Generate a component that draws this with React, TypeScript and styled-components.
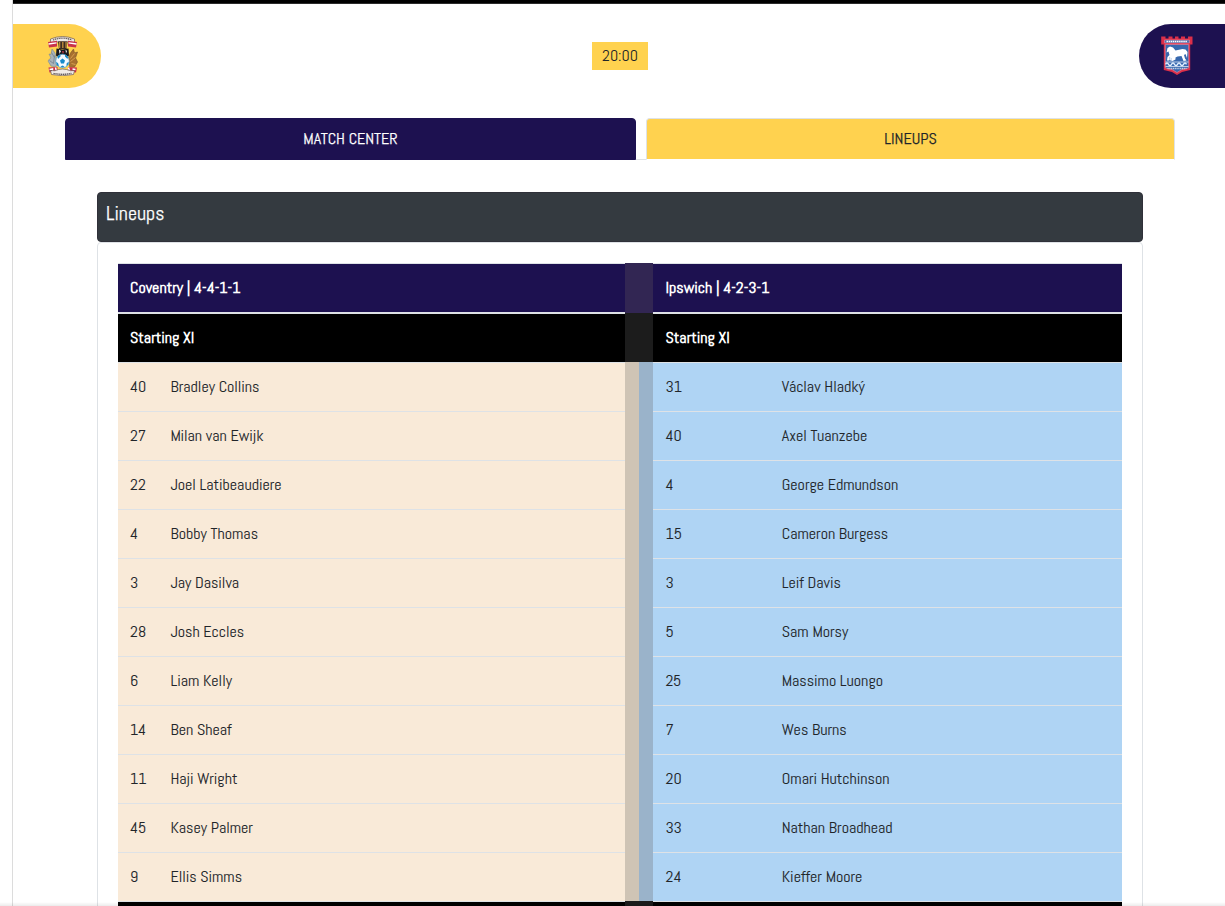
import React from "react";
import styled, { createGlobalStyle } from "styled-components";

const navy = "#1d1150";
const gold = "#ffd24f";
const line = "#dee2e6";

const GlobalStyle = createGlobalStyle`
  *, *::before, *::after { box-sizing: border-box; }
  body {
    margin: 0;
    height: 906px;
    overflow: hidden;
    background: #fff;
    color: #212529;
    font: 16px/24px Abel, "Liberation Sans Narrow", "Liberation Sans", sans-serif;
  }
`;

const Page = styled.main`
  height: 906px;
  margin-left: 12px;
  border-left: 1px solid #dcdcdc;
  overflow: hidden;
`;

const TopBar = styled.div`
  height: 4px;
  background: #000;
  border-bottom: 1px solid #2b2b2b;
`;

const Scoreboard = styled.header`
  display: flex;
  justify-content: space-between;
  align-items: center;
  height: 64px;
  margin-top: 20px;
`;

const TeamBadge = styled.div<{ $side: "home" | "away" }>`
  display: flex;
  align-items: center;
  height: 64px;
  width: ${(p) => (p.$side === "home" ? 88 : 86)}px;
  padding-left: ${(p) => (p.$side === "home" ? 34 : 22)}px;
  background: ${(p) => (p.$side === "home" ? gold : navy)};
  border-radius: ${(p) => (p.$side === "home" ? "0 32px 32px 0" : "32px 0 0 32px")};
`;

const KickOff = styled.div`
  width: 56px;
  height: 28px;
  line-height: 28px;
  text-align: center;
  background: ${gold};
`;

const Tabs = styled.nav`
  display: flex;
  height: 42px;
  margin: 30px 50px 0 52px;
`;

const TabSpacer = styled.span`
  width: 10px;
  border-bottom: 1px solid ${line};
`;

const Tab = styled.button<{ $active?: boolean }>`
  flex: 0 0 ${(p) => (p.$active ? 529 : 571)}px;
  height: 42px;
  padding: 0;
  font: inherit;
  text-align: center;
  -webkit-text-stroke: 0.25px currentColor;
  color: ${(p) => (p.$active ? "#212529" : "#fff")};
  background: ${(p) => (p.$active ? gold : navy)};
  border: 1px solid ${(p) => (p.$active ? line : navy)};
  border-bottom-color: ${(p) => (p.$active ? "#fff" : navy)};
  border-radius: 4px 4px 0 0;
`;

const Panel = styled.section`
  margin: 32px 82px 0 84px;
`;

const PanelTitle = styled.h2`
  height: 50px;
  margin: 0;
  padding: 8px;
  font-size: 20px;
  font-weight: 400;
  line-height: 24px;
  -webkit-text-stroke: 0.25px currentColor;
  color: #fff;
  background: #343a40;
  border: 1px solid #2f3039;
  border-radius: 4px;
`;

const PanelBody = styled.div`
  height: 680px;
  padding: 20px;
  border: 1px solid ${line};
  border-radius: 4px;
`;

const Sheet = styled.div`
  display: grid;
  grid-template-columns: 507px 28px 469px;
`;

const Column = styled.div<{ $side: "home" | "away" }>`
  --inset: ${(p) => (p.$side === "home" ? "12px" : "12.5px")};
`;

const HeadRow = styled.div<{ $dark?: boolean }>`
  height: ${(p) => (p.$dark ? 49 : 50)}px;
  padding: 12px var(--inset);
  font-weight: 700;
  color: #fff;
  background: ${(p) => (p.$dark ? "#000" : navy)};
  border-top: 1px solid ${line};
  ${(p) => !p.$dark && `border-bottom: 1px solid ${line};`}
`;

const PlayerRow = styled.div<{ $side: "home" | "away" }>`
  display: grid;
  grid-template-columns: ${(p) => (p.$side === "home" ? "40.5px" : "116.3px")} 1fr;
  height: 49px;
  padding: 12px var(--inset) 0;
  -webkit-text-stroke: 0.1px currentColor;
  background: ${(p) => (p.$side === "home" ? "#f9ead8" : "#afd4f4")};
  border-top: 1px solid ${line};
`;

const Gutter = styled.div`
  display: grid;
  grid-template-rows: 50px 49px 539px 1fr;
`;

const GutterCell = styled.div<{ $color: string }>`
  background: ${(p) => p.$color};
`;

const GutterSplit = styled.div`
  display: grid;
  grid-template-columns: 1fr 1fr;
`;

const BottomShade = styled.div`
  position: fixed;
  inset: auto 0 0 0;
  height: 4px;
  background: linear-gradient(rgba(0, 0, 0, 0), rgba(0, 0, 0, 0.08));
`;

function CoventryCrest() {
  return (
    <svg width="32" height="40" viewBox="0.500 0.500 32 40" aria-label="Coventry">
      <path d="M4 3.500Q16-1.500 28 3.500V8q-12-4-24 0z" fill="#efe9e6" stroke="#6b5a55" strokeWidth=".7" />
      <path d="M6.500 4.500Q16 .8 25.500 4.500" fill="none" stroke="#655d60" strokeWidth="1.300" strokeDasharray="1.300 .6" />
      <path d="M1.500 6.500l9-1.200V11l-8 1zM21.500 5.300l9 1.200-1 5.500-8-1z" fill="#c8324a" />
      <path d="M2 8.500l8-1.200M22 7.300l8 1.200" stroke="#fff" strokeWidth="1.300" />
      <path d="M11.500 6h9.500l-1 8h-7.500z" fill="#3b2b24" />
      <path d="M12.500 6.500h1.300v6h-1.300zM15.600 6.500h1.400v6h-1.400zM18.900 6.500h1.300v6h-1.300z" fill="#be8b3c" />
      <path d="M10 13l3 .5 3 1 3-1 3-.5.500 7-2 2h-9l-2-2z" fill="#17171c" />
      <path d="M12.500 14l2 1.500-1.500 3zM19 14l1.500 1.500-1 2.500z" fill="#fff" />
      <path d="M15.500 15.500l2 .5-1 2.500z" fill="#d8404c" />
      <path d="M5.500 13.500l3 4 1 4.500 1 4-1 5.500-5-1-3-5 1.500-2 1.500-1-2-4 2 .5z" fill="#a9b3ba" stroke="#7c8990" strokeWidth=".6" />
      <path d="M5 17l3 5M3 25l4 3M8 20l-1 8" stroke="#71838f" strokeWidth=".8" />
      <path d="M27 13.500l-3 4-2 4.500 1 9 5 .5 3-5-2-4 2-6-3 1z" fill="#a8702f" stroke="#74502a" strokeWidth=".6" />
      <path d="M28 18l-4 5M29 22l-5 4M25 28l4 1" stroke="#dba452" strokeWidth=".9" />
      <circle cx="16" cy="25.500" r="6.800" fill="#f4faff" stroke="#4a96c2" strokeWidth=".7" />
      <path d="M13.500 25l2.500-2 2.500 2-1 3h-3zM11 21l3-2v2l-2.500 2.500zM18.500 19l3 2.500-.5 2-2.500-2.500zM9.500 26.500l2 1 1 3-2-.5zM22.300 26.500l-.5 2.500-2 1.500.500-3zM14 31l2-1 2 1-2 1z" fill="#168acb" />
      <path d="M2 32l9-.5V36l-8 1zM21.500 31.500l9 .5-1 5-8-1z" fill="#c92e48" />
      <path d="M3 34l3-.5v3M26 33.500l3 .5M9 32l1 4M22 32l1 4" stroke="#fff" strokeWidth="1.500" />
      <path d="M4 35q5 1 8-1 4-1 8 0 4 2 8 1l-1 4q-11 2.500-22 0z" fill="#f1ebe7" stroke="#6b5a55" strokeWidth=".7" />
      <path d="M7 37.800q9 2 18 0" fill="none" stroke="#5e5659" strokeWidth="1.300" strokeDasharray="1.300 .6" />
    </svg>
  );
}

function IpswichCrest() {
  return (
    <svg width="32" height="40" viewBox="0.500 0.500 32 40" aria-label="Ipswich">
      <path d="M.7 1H5v2h3V1h4v2h2.500V1H18v2h2.500V1h4v2h3V1H32v8h-2.300v25.500L21.500 36.500l-5 3-5-3-8.200-2V9H.7z" fill="#dc2f49" />
      <path d="M4.800 9h23.400v23.500L21.500 34l-5 3-5-3-6.700-1.500z" fill="#3768ae" stroke="#dd8298" strokeWidth=".7" />
      <path d="M4 4.500h25v3H4z" fill="#4e70ae" stroke="#f198a8" strokeWidth=".5" />
      <path d="M6 6h21" stroke="#fff" strokeWidth="1.500" strokeDasharray="1.500 .6" />
      <path d="M7 12.500l2.500-1.500 3 1 2.500 3 7-1.500 3 .5 2 2.500-.5 6-1.500-4-1.500 1 1 3.500 1.500 2-3 .5-2-5-4 .5-2 1v2l-3 1.500-1.500-.5 1-2-3-1v3H6.500l.5-3.500 2-2-1-3.500-2 1z" fill="#fff" />
      <circle cx="10" cy="23.500" r="1.500" fill="#e3ebf8" />
      <path d="M5 26.500h23M5 31h23" stroke="#dce6f5" strokeWidth=".8" />
      <path d="M5 28.800q1.500-2.500 3 0t3 0 3 0 3 0 3 0 3 0 3 0" fill="none" stroke="#e2efff" strokeWidth="1.400" />
      <path d="M7 33h19" stroke="#c5d0e5" strokeWidth="1.500" strokeDasharray="1.200 .6" />
    </svg>
  );
}

type Player = [number, string];

const home: Player[] = [
  [40, "Bradley Collins"],
  [27, "Milan van Ewijk"],
  [22, "Joel Latibeaudiere"],
  [4, "Bobby Thomas"],
  [3, "Jay Dasilva"],
  [28, "Josh Eccles"],
  [6, "Liam Kelly"],
  [14, "Ben Sheaf"],
  [11, "Haji Wright"],
  [45, "Kasey Palmer"],
  [9, "Ellis Simms"],
];

const away: Player[] = [
  [31, "Václav Hladký"],
  [40, "Axel Tuanzebe"],
  [4, "George Edmundson"],
  [15, "Cameron Burgess"],
  [3, "Leif Davis"],
  [5, "Sam Morsy"],
  [25, "Massimo Luongo"],
  [7, "Wes Burns"],
  [20, "Omari Hutchinson"],
  [33, "Nathan Broadhead"],
  [24, "Kieffer Moore"],
];

function Lineup({ side, title, players }: { side: "home" | "away"; title: string; players: Player[] }) {
  return (
    <Column $side={side}>
      <HeadRow>{title}</HeadRow>
      <HeadRow $dark>Starting XI</HeadRow>
      {players.map(([number, name]) => (
        <PlayerRow key={name} $side={side}>
          <span>{number}</span>
          <span>{name}</span>
        </PlayerRow>
      ))}
      <HeadRow $dark />
    </Column>
  );
}

export default function App() {
  return (
    <>
      <GlobalStyle />
      <Page>
        <TopBar />
        <Scoreboard>
          <TeamBadge $side="home"><CoventryCrest /></TeamBadge>
          <KickOff>20:00</KickOff>
          <TeamBadge $side="away"><IpswichCrest /></TeamBadge>
        </Scoreboard>
        <Tabs>
          <Tab>MATCH CENTER</Tab>
          <TabSpacer />
          <Tab $active>LINEUPS</Tab>
        </Tabs>
        <Panel>
          <PanelTitle>Lineups</PanelTitle>
          <PanelBody>
            <Sheet>
              <Lineup side="home" title="Coventry | 4-4-1-1" players={home} />
              <Gutter>
                <GutterCell $color="#322653" />
                <GutterCell $color="#1c1c1c" />
                <GutterSplit>
                  <GutterCell $color="#cfc4b5" />
                  <GutterCell $color="#9ab3ca" />
                </GutterSplit>
                <GutterCell $color="#1c1c1c" />
              </Gutter>
              <Lineup side="away" title="Ipswich | 4-2-3-1" players={away} />
            </Sheet>
          </PanelBody>
        </Panel>
      </Page>
      <BottomShade />
    </>
  );
}
